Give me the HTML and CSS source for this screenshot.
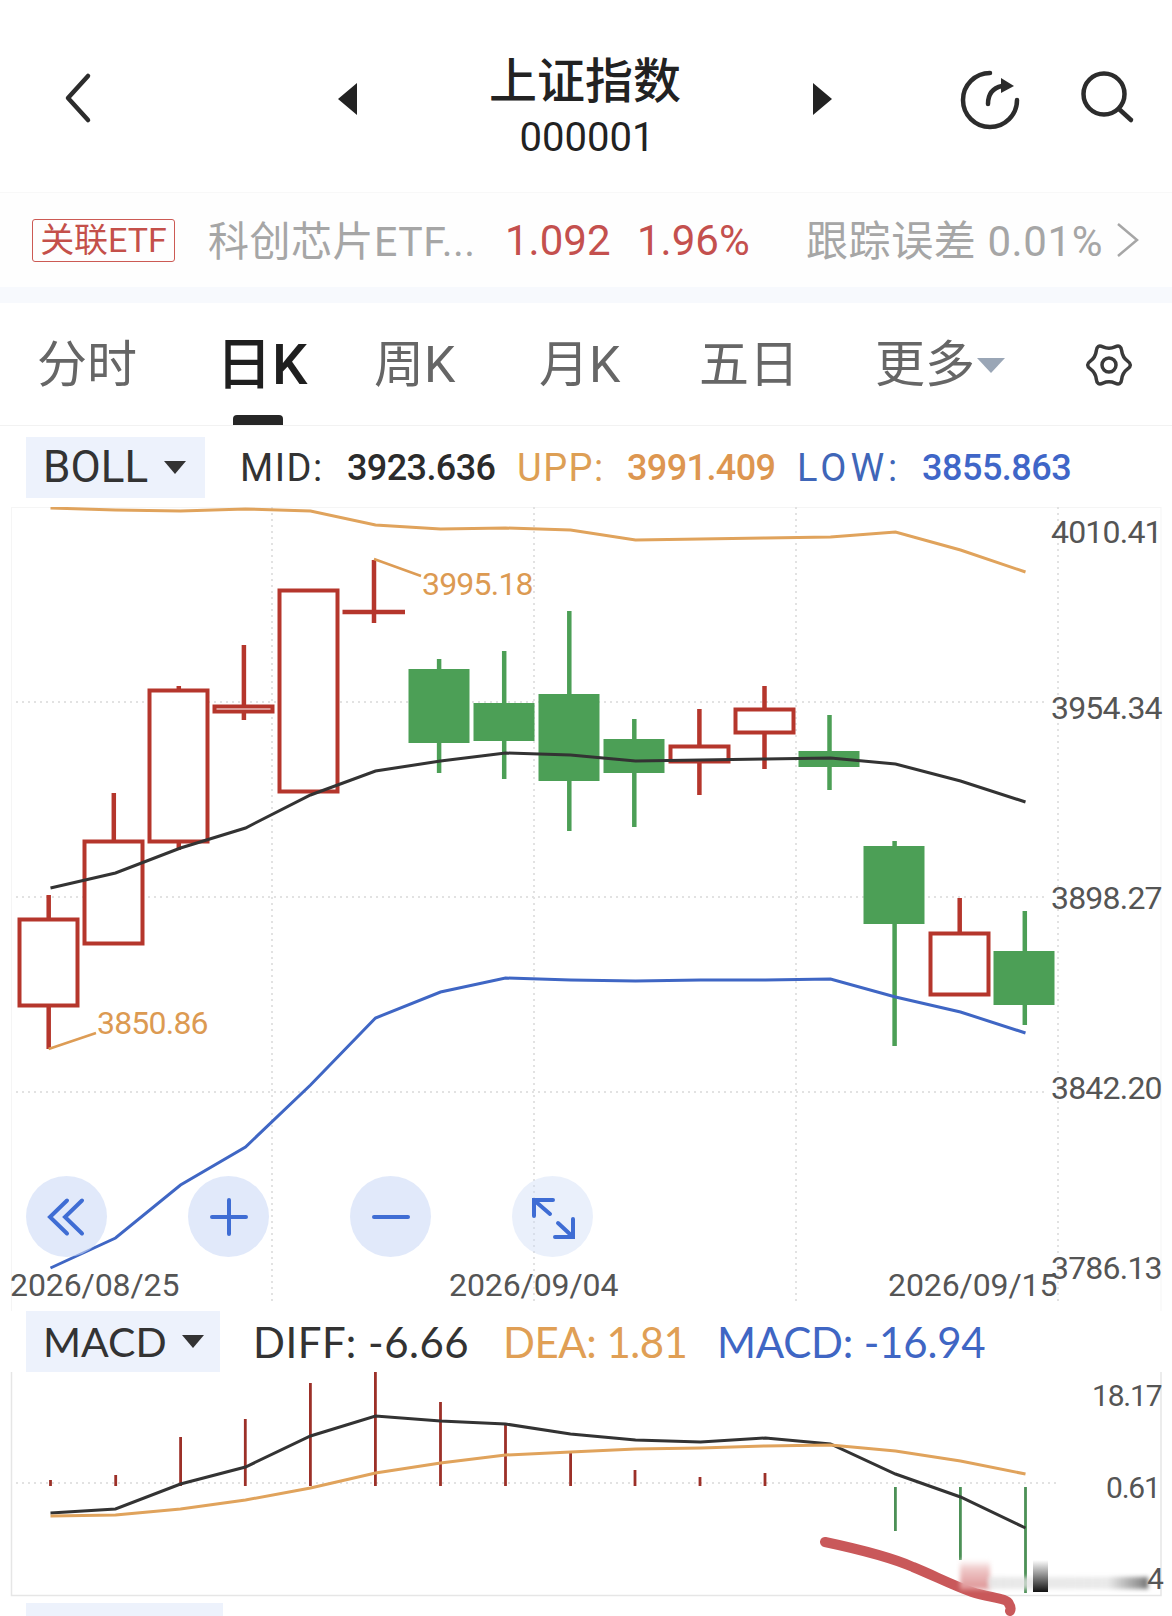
FILE: index.html
```html
<!DOCTYPE html>
<html lang="zh-CN">
<head>
  <meta charset="UTF-8" />
  <title>上证指数 000001</title>
  <meta name="viewport" content="width=device-width, initial-scale=1" />
  <link rel="stylesheet" href="styles.css">
</head>
<body>
  <header class="topbar">
    <div class="back">
      <svg width="30" height="52" viewBox="0 0 30 52"><path d="M25 4 L5 26 L25 48" class="icon-line"/></svg>
    </div>
    <span class="tri-left"></span>
    <div class="title">
      <h1>上证指数</h1>
      <p>000001</p>
    </div>
    <span class="tri-right"></span>
    <div class="top-icons">
      <svg width="64" height="64" viewBox="0 0 64 64">
        <path d="M32 5 A27 27 0 1 0 59 32" class="icon-line"/>
        <path d="M30 36 C30 26 35 20 44 18" class="icon-line"/>
        <path d="M43 10 L56 18 L43 25 Z" class="icon-fill"/>
      </svg>
      <svg width="64" height="64" viewBox="0 0 64 64">
        <circle cx="28" cy="28" r="20.5" class="icon-line"/>
        <path d="M43 43 L55 54" class="icon-line"/>
      </svg>
    </div>
  </header>

  <section class="etf">
    <span class="etf-tag">关联ETF</span>
    <span class="etf-name">科创芯片ETF...</span>
    <span class="etf-price">1.092</span>
    <span class="etf-pct">1.96%</span>
    <span class="etf-track">跟踪误差 0.01%</span>
    <svg width="26" height="36" viewBox="0 0 26 36"><path d="M3 2 L22 18 L3 34" class="etf-arrow"/></svg>
  </section>
  <div class="band"></div>

  <nav class="tabs">
    <a class="tab t1">分时</a>
    <a class="tab t2 active">日K</a>
    <a class="tab t3">周K</a>
    <a class="tab t4">月K</a>
    <a class="tab t5">五日</a>
    <a class="tab t6">更多<i class="more-tri"></i></a>
    <svg class="gear" width="48" height="48" viewBox="0 0 48 48">
      <path d="M30 5.85 Q36 3.2 36.7 9.73 Q37.4 16.25 42.7 20.13 Q48 24 42.7 27.88 Q37.4 31.75 36.7 38.28 Q36 44.8 30 42.15 Q24 39.5 18 42.15 Q12 44.8 11.3 38.28 Q10.6 31.75 5.3 27.88 Q0 24 5.3 20.13 Q10.6 16.25 11.3 9.73 Q12 3.2 18 5.85 Q24 8.5 30 5.85Z" class="gear-line"/>
      <circle cx="24" cy="24" r="7" class="gear-line"/>
    </svg>
  </nav>

  <div class="boll-row">
    <span class="chip boll-chip">BOLL<i class="chip-tri"></i></span>
    <span class="stat mid-label">MID:</span>
    <span class="stat mid-value">3923.636</span>
    <span class="stat upp-label">UPP:</span>
    <span class="stat upp-value">3991.409</span>
    <span class="stat low-label">LOW:</span>
    <span class="stat low-value">3855.863</span>
  </div>

  <div class="chart">
    <svg class="kline" width="1172" height="804" viewBox="0 507 1172 804">
      <rect x="11.5" y="507.5" width="1149.5" height="810" class="frame"/>
      <!-- grid -->
      <path d="M16 702H1046M16 897H1046M16 1092H1046" class="grid"/>
      <path d="M272 507V1302M534 507V1302M796 507V1302M1058 507V1302" class="grid"/>

      <!-- candles -->
      <path d="M48.7 895V918M48.7 1007V1049" class="wick-up"/>
      <rect x="19.5" y="919.5" width="58" height="86" class="body-up"/>
      <path d="M113.8 793V840" class="wick-up"/>
      <rect x="84.5" y="841.5" width="58" height="102" class="body-up"/>
      <path d="M178.8 686V689M178.8 843V850" class="wick-up"/>
      <rect x="149.5" y="690.5" width="58" height="151" class="body-up"/>
      <path d="M243.9 645V705M243.9 713V720" class="wick-up"/>
      <rect x="214.5" y="706.5" width="58" height="5" class="body-up"/>
      <rect x="279.5" y="590.5" width="58" height="201" class="body-up"/>
      <path d="M374 560V623M342.5 612H405" class="wick-up"/>
      <path d="M439.1 659V773" class="wick-down"/>
      <rect x="408.5" y="669" width="61" height="74" class="body-down"/>
      <path d="M504.2 651V779" class="wick-down"/>
      <rect x="473.5" y="703" width="61" height="38" class="body-down"/>
      <path d="M569.3 611V831" class="wick-down"/>
      <rect x="538.5" y="694" width="61" height="87" class="body-down"/>
      <path d="M634.3 719V827" class="wick-down"/>
      <rect x="603.5" y="739" width="61" height="34" class="body-down"/>
      <path d="M699.4 709V745M699.4 763V795" class="wick-up"/>
      <rect x="670.5" y="746.5" width="58" height="15" class="body-up"/>
      <path d="M764.5 686V708M764.5 734V769" class="wick-up"/>
      <rect x="735.5" y="709.5" width="58" height="23" class="body-up"/>
      <path d="M829.5 715V790" class="wick-down"/>
      <rect x="798.5" y="751" width="61" height="16" class="body-down"/>
      <path d="M894.6 841V1046" class="wick-down"/>
      <rect x="863.5" y="846" width="61" height="78" class="body-down"/>
      <path d="M959.7 898V932" class="wick-up"/>
      <rect x="930.5" y="933.5" width="58" height="61" class="body-up"/>
      <path d="M1024.8 911V1025" class="wick-down"/>
      <rect x="993.5" y="951" width="61" height="54" class="body-down"/>

      <!-- boll lines -->
      <polyline class="line orange" points="50.5,508 115.5,510 180.5,511 245.5,509 310.5,511 375.5,525 440.5,529 505.5,528 570.5,530 635.5,540 700.5,539 765.5,538 830.5,537 895.5,532 960.5,550 1025.5,572"/>
      <polyline class="line black" points="50.5,888 115.5,873 180.5,848 245.5,828 310.5,795 375.5,771 440.5,761 505.5,753 570.5,755 635.5,761 700.5,760 765.5,759 830.5,758 895.5,764 960.5,781 1025.5,802"/>
      <polyline class="line blue" points="50.5,1268 115.5,1238 180.5,1185 245.5,1147 310.5,1085 375.5,1018 440.5,992 505.5,978 570.5,980 635.5,981 700.5,980 765.5,980 830.5,979 895.5,997 960.5,1012 1025.5,1033"/>

      <!-- high/low marks -->
      <path d="M374 559L421 576M48.6 1049L96 1033" class="leader"/>
      <text x="422" y="595" class="mark">3995.18</text>
      <text x="97" y="1034" class="mark">3850.86</text>

      <text x="1051" y="543" class="axis">4010.41</text>
      <text x="1051" y="719" class="axis">3954.34</text>
      <text x="1051" y="909" class="axis">3898.27</text>
      <text x="1051" y="1099" class="axis">3842.20</text>
      <text x="1051" y="1279" class="axis">3786.13</text>
      <text x="10" y="1296" class="axis date">2026/08/25</text>
      <text x="449" y="1296" class="axis date">2026/09/04</text>
      <text x="888" y="1296" class="axis date">2026/09/15</text>
    </svg>

    <div class="tools">
      <button class="tool">
        <svg width="48" height="48" viewBox="-24 -24 48 48"><path d="M0 -16.5L-17 0L0 16.5M15 -16.5L-2 0L15 16.5" class="tool-line"/></svg>
      </button>
      <button class="tool">
        <svg width="48" height="48" viewBox="-24 -24 48 48"><path d="M-17 0H17M0 -17V17" class="tool-line"/></svg>
      </button>
      <button class="tool">
        <svg width="48" height="48" viewBox="-24 -24 48 48"><path d="M-17 0H17" class="tool-line"/></svg>
      </button>
      <button class="tool tool-light">
        <svg width="48" height="48" viewBox="-24 -24 48 48"><path d="M-19 -1V-17H0M-18 -16L-3 -3M20 2V20H2M19 19L5 6" class="tool-line"/></svg>
      </button>
    </div>
  </div>

  <div class="macd-row">
    <span class="chip macd-chip">MACD<i class="chip-tri"></i></span>
    <span class="macd-stat diff">DIFF: -6.66</span>
    <span class="macd-stat dea">DEA: 1.81</span>
    <span class="macd-stat macd">MACD: -16.94</span>
  </div>

  <div class="macd-chart">
    <svg class="macd-svg" width="1172" height="224" viewBox="0 1372 1172 224">
      <path d="M11.5 1372V1595.5H1161V1372" class="frame-macd"/>
      <path d="M16 1483H1056" class="grid"/>

      <path d="M50.5 1480V1486M115.7 1475V1486M180.6 1437V1486M245.3 1419V1486M310.4 1383V1486M375.4 1372V1486M440.5 1402V1486M505.5 1424V1486M570.6 1452V1486M635 1470V1486M700 1477V1486M765 1473V1486" class="bar-up"/>
      <path d="M895.4 1487V1531M960.4 1487V1560M1025.5 1487V1593" class="bar-down"/>

      <polyline class="line black" points="50.5,1513 115.5,1509 180.5,1484 245.5,1467 310.5,1436 375.5,1416 440.5,1421 505.5,1424 570.5,1434 635.5,1440 700.5,1442 765.5,1438 830.5,1444 895.5,1474 960.5,1497 1025.5,1528"/>
      <polyline class="line orange" points="50.5,1516 115.5,1515 180.5,1509 245.5,1500 310.5,1488 375.5,1473 440.5,1463 505.5,1455 570.5,1452 635.5,1449 700.5,1448 765.5,1446 830.5,1445 895.5,1451 960.5,1461 1025.5,1474"/>

      <text x="1092" y="1406" class="axis-small">18.17</text>
      <text x="1106" y="1498" class="axis-small">0.61</text>
      <text x="1147" y="1589" class="axis-small">4</text>

      <!-- scribble over the picture -->
      <path d="M825 1542C858 1549 888 1556 913 1567C935 1576 952 1585 972 1592C990 1598 1007 1598 1009 1604C1011 1607 1011 1609 1010 1611" class="scribble"/>
    </svg>
    <div class="smudge-pink"></div>
    <div class="smudge"></div>
    <div class="smudge-bar"></div>
  </div>

  <div class="last-row">
    <span class="chip last-chip"></span>
  </div>
</body>
</html>
```

FILE: styles.css
```css
* {
  box-sizing: border-box;
}
html, body {
  margin: 0;
  height: 1616px;
  overflow: hidden;
  background-color: #fff;
}
body {
  font-family: Roboto, "Noto Sans CJK SC", sans-serif;
  color: #333;
}
h1, p {
  margin: 0;
}

/* top bar */
.topbar {
  height: 192px;
  display: grid;
  grid-template-columns: 338px 19px 1fr 19px 340px;
  align-items: center;
}
.back {
  padding: 4px 0 0 63px;
}
.back svg,
.top-icons svg {
  display: block;
}
.icon-line {
  fill: none;
  stroke: #2c2c2c;
  stroke-width: 4.5;
  stroke-linecap: round;
  stroke-linejoin: round;
}
.icon-fill {
  fill: #2c2c2c;
}
.tri-left,
.tri-right {
  display: block;
  width: 0;
  height: 0;
  margin-top: 6px;
  border-top: 16px solid transparent;
  border-bottom: 16px solid transparent;
}
.tri-left {
  border-right: 19px solid #222;
}
.tri-right {
  border-left: 19px solid #222;
}
.title {
  text-align: center;
  padding-top: 24px;
}
.title h1 {
  font-size: 48px;
  line-height: 52px;
  font-weight: 500;
  color: #222;
}
.title p {
  font-size: 40px;
  line-height: 44px;
  margin-top: 8px;
  padding-left: 4px;
  color: #222;
}
.top-icons {
  display: flex;
  gap: 54px;
  padding: 7px 0 0 126px;
}
.top-icons svg + svg {
  margin-top: -2px;
}

/* etf row */
.etf {
  height: 95px;
  display: flex;
  align-items: center;
  padding-left: 32px;
  background-color: #fefefe;
  border-top: 1px solid #f8f8f8;
  white-space: nowrap;
}
.etf-tag {
  width: 143px;
  height: 43px;
  margin-right: 33px;
  border: 1px solid #cc5a54;
  border-radius: 3px;
  color: #c4504a;
  font-size: 34px;
  line-height: 40px;
  text-align: center;
}
.etf-name,
.etf-track {
  color: #a6a6a6;
  font-size: 41px;
  letter-spacing: 0.5px;
  margin-top: -5px;
}
.etf-name {
  width: 297px;
}
.etf-price,
.etf-pct {
  color: #c4504e;
  font-size: 42px;
}
.etf-price {
  width: 132px;
}
.etf-pct {
  width: 169px;
}
.etf-track {
  width: 309px;
  font-size: 42px;
  letter-spacing: 0.6px;
}
.etf-arrow {
  fill: none;
  stroke: #a6a6a6;
  stroke-width: 2.5;
}
.band {
  height: 16px;
  background-color: #f7f9fd;
}

/* period tabs */
.tabs {
  height: 123px;
  display: flex;
  align-items: center;
  padding: 0 0 0 37px;
  border-bottom: 1px solid #f2f2f2;
}
.tab {
  position: relative;
  display: block;
  font-size: 50px;
  line-height: 60px;
  color: #666;
  margin-top: 2px;
  white-space: nowrap;
}
.t1 { width: 179px; }
.t2 { width: 158px; }
.t3 { width: 165px; }
.t4 { width: 160px; }
.t5 { width: 176px; }
.t6 { width: 210px; }
.active {
  color: #1f1f1f;
  font-size: 56px;
  font-weight: 500;
}
.active::after {
  content: "";
  position: absolute;
  left: 17px;
  bottom: -30px;
  width: 50px;
  height: 10px;
  background-color: #262626;
  border-radius: 4px 4px 0 0;
}
.more-tri {
  display: inline-block;
  width: 0;
  height: 0;
  margin: 0 0 7px 2px;
  vertical-align: middle;
  border-left: 14px solid transparent;
  border-right: 14px solid transparent;
  border-top: 15px solid #9aa6b6;
}
.gear {
  margin-top: 1px;
}
.gear-line {
  fill: none;
  stroke: #3a3a3a;
  stroke-width: 3.5;
}

/* indicator rows */
.chip {
  display: flex;
  align-items: center;
  flex: none;
  background-color: #edf2fc;
  color: #333;
}
.chip-tri {
  display: block;
  width: 0;
  height: 0;
  border-left: 11px solid transparent;
  border-right: 11px solid transparent;
  border-top: 13px solid #333;
}
.boll-row {
  height: 81px;
  display: flex;
  align-items: center;
  padding-left: 26px;
  white-space: nowrap;
}
.boll-chip {
  width: 179px;
  height: 61px;
  padding-left: 17px;
  font-size: 44px;
  margin-right: 35px;
  margin-top: 1px;
}
.boll-chip .chip-tri {
  margin-left: 16px;
}
.stat {
  font-size: 36px;
  padding-top: 2px;
}
.mid-label { width: 107px; color: #333; font-size: 38px; letter-spacing: 1.5px; }
.mid-value { width: 170px; color: #2b2b2b; font-weight: 500; letter-spacing: -0.6px; }
.upp-label { width: 110px; color: #dd9f55; font-size: 38px; letter-spacing: 1.5px; }
.upp-value { width: 170px; color: #dd9650; font-weight: 500; letter-spacing: -0.6px; }
.low-label { width: 125px; color: #3f66b8; font-size: 38px; letter-spacing: 4px; }
.low-value { color: #3f66c8; font-weight: 500; letter-spacing: -0.5px; }

/* k line chart */
.chart {
  position: relative;
  height: 804px;
}
.kline,
.macd-svg {
  display: block;
}
.frame {
  fill: none;
  stroke: #f5f5f5;
}
.frame-macd {
  fill: none;
  stroke: #e6e6e6;
  stroke-width: 1.5;
}
.grid {
  fill: none;
  stroke: #e2e2e2;
  stroke-width: 2;
  stroke-dasharray: 2 4;
}
.wick-up,
.wick-down {
  fill: none;
  stroke-width: 4.5;
}
.wick-up {
  stroke: #b5362c;
}
.wick-down {
  stroke: #4c9f56;
}
.body-up {
  fill: #fff;
  stroke: #b5362c;
  stroke-width: 4;
}
.body-down {
  fill: #4c9f56;
}
.line {
  fill: none;
  stroke-width: 3;
}
.orange { stroke: #e0a35c; }
.black { stroke: #333; }
.blue { stroke: #3f66c4; }
.leader {
  fill: none;
  stroke: #dd9c55;
  stroke-width: 2.5;
}
.mark,
.axis {
  font-size: 32px;
  letter-spacing: -0.8px;
}
.axis.date {
  letter-spacing: -0.1px;
}
.mark {
  fill: #dc9a52;
}
.axis,
.axis-small {
  fill: #555;
}
.axis-small {
  font-size: 30px;
  letter-spacing: -1.2px;
}
.tools {
  position: absolute;
  left: 26px;
  top: 669px;
  display: flex;
  gap: 81px;
}
.tool {
  display: flex;
  align-items: center;
  justify-content: center;
  width: 81px;
  height: 81px;
  padding: 0;
  border: none;
  border-radius: 50%;
  background-color: rgba(205, 219, 246, 0.6);
}
.tool-light {
  background-color: rgba(205, 219, 246, 0.42);
}
.tool-line {
  fill: none;
  stroke: #3f6dd4;
  stroke-width: 4;
  stroke-linecap: round;
}

/* macd */
.macd-row {
  height: 61px;
  display: flex;
  align-items: center;
  padding-left: 26px;
  white-space: nowrap;
  font-family: Lato, sans-serif;
}
.macd-chip {
  width: 194px;
  height: 61px;
  padding-left: 17px;
  font-size: 41px;
  margin-right: 33px;
}
.macd-chip .chip-tri {
  margin-left: 15px;
}
.macd-stat {
  font-size: 42px;
}
.diff { width: 250px; color: #333; letter-spacing: 0.5px; }
.dea { width: 214px; color: #e09f55; letter-spacing: -0.5px; }
.macd { color: #3f66c4; letter-spacing: -0.2px; }
.macd-chart {
  position: relative;
  height: 224px;
}
.macd-svg {
  overflow: visible;
}
.bar-up,
.bar-down {
  fill: none;
  stroke-width: 2.8;
}
.bar-up {
  stroke: #9c3028;
}
.bar-down {
  stroke: #4c9056;
}
.scribble {
  fill: none;
  stroke: #c9585a;
  stroke-width: 10;
  stroke-linecap: round;
  stroke-linejoin: round;
}
/* blurred bits of the screenshot, near the bottom right */
.smudge-pink {
  position: absolute;
  left: 960px;
  top: 188px;
  width: 30px;
  height: 30px;
  background: linear-gradient(to bottom, #fff, #efc9c9 30%, #e09a9b 90%, rgba(224, 154, 155, 0.6));
  filter: blur(2px);
}
.smudge {
  position: absolute;
  left: 988px;
  top: 205px;
  width: 160px;
  height: 12px;
  background: linear-gradient(to right, rgba(225, 225, 225, 0.75), rgba(228, 228, 228, 0.8) 75%, #8a8a8a 97%, #666);
  filter: blur(2px);
}
.smudge-bar {
  position: absolute;
  left: 1033px;
  top: 188px;
  width: 15px;
  height: 32px;
  background: linear-gradient(to bottom, #fff, #111);
}

/* next indicator, cut by the screen edge */
.last-row {
  padding: 7px 0 0 26px;
}
.last-chip {
  width: 197px;
  height: 13px;
}
```
